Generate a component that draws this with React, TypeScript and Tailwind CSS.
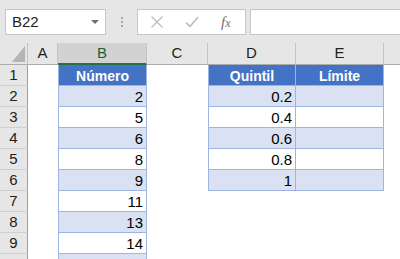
import React from "react";

type Row = { n: number; b?: string; d?: string; e?: string };

const rows: Row[] = [
  { n: 1, b: "Número", d: "Quintil", e: "Límite" },
  { n: 2, b: "2", d: "0.2", e: "" },
  { n: 3, b: "5", d: "0.4", e: "" },
  { n: 4, b: "6", d: "0.6", e: "" },
  { n: 5, b: "8", d: "0.8", e: "" },
  { n: 6, b: "9", d: "1", e: "" },
  { n: 7, b: "11" },
  { n: 8, b: "13" },
  { n: 9, b: "14" },
  { n: 10, b: "" },
];

const ColHead = ({ label, w, active = false }: { label: string; w: string; active?: boolean }) => (
  <div
    className={`${w} h-full shrink-0 box-border flex items-center justify-center text-[15px] border-r border-r-[#c4c4c4] ${
      active
        ? "bg-[#d2d2d2] border-b-2 border-b-[#217346] text-[#1d5e3a]"
        : "bg-[#e6e6e6] border-b border-b-[#ababab] text-[#222]"
    }`}
  >
    {label}
  </div>
);

const TableCell = ({
  text,
  n,
  w,
  left = false,
}: {
  text: string;
  n: number;
  w: string;
  left?: boolean;
}) => {
  const head = n === 1;
  const band = n % 2 === 0;
  return (
    <div
      className={`${w} h-full shrink-0 box-border border-r border-b border-[#9db5e0] ${left ? "border-l" : ""} ${
        head
          ? "bg-[#4472c4] text-white font-bold text-[14px] text-center"
          : band
          ? "bg-[#d9e1f2] text-black text-[15px] text-right pr-[3px]"
          : "bg-white text-black text-[15px] text-right pr-[3px]"
      } leading-[20px] pt-[1px]`}
    >
      {text}
    </div>
  );
};

export default function App() {
  return (
    <div className="w-[400px] h-[259px] overflow-hidden bg-white font-['Liberation_Sans',Arial,sans-serif]">
      {/* formula bar */}
      <div className="h-[43px] bg-[#e6e6e6] flex items-start pt-[9px] pl-[5px]">
        <div className="w-[101px] h-[26px] box-border bg-white border border-[#c6c6c6] flex items-center justify-between pl-[6px] pr-[6px] text-[15px] text-[#222]">
          <span>B22</span>
          <svg width="8" height="4" viewBox="0 0 8 4">
            <path d="M0 0 L8 0 L4 4 Z" fill="#6f6f6f" />
          </svg>
        </div>
        <div className="w-[31px] h-[26px] flex flex-col items-center justify-center gap-[2px]">
          <span className="w-[2px] h-[2px] bg-[#a6a6a6]" />
          <span className="w-[2px] h-[2px] bg-[#a6a6a6]" />
          <span className="w-[2px] h-[2px] bg-[#a6a6a6]" />
        </div>
        <div className="w-[109px] h-[26px] box-border bg-white border border-[#c6c6c6] flex items-center">
          <svg width="14" height="14" viewBox="0 0 14 14" className="ml-[12px]">
            <path d="M1.5 1.5 L12.5 12.5 M12.5 1.5 L1.5 12.5" stroke="#bcbcbc" strokeWidth="1.3" />
          </svg>
          <svg width="14" height="12" viewBox="0 0 14 12" className="ml-[21px]">
            <path d="M1 6.5 L5 10.5 L13 1" stroke="#bcbcbc" strokeWidth="1.6" fill="none" />
          </svg>
          <span className="ml-[22px] text-[15px] italic text-[#6f6f6f] font-['Liberation_Serif',serif] leading-none">
            f<span className="text-[12px]">x</span>
          </span>
        </div>
        <div className="flex-1 ml-[4px] -mr-[4px] h-[26px] box-border bg-white border border-[#c6c6c6]" />
      </div>

      {/* column headers */}
      <div className="h-[22px] flex">
        <div className="w-[28px] h-full shrink-0 box-border bg-[#e6e6e6] border-r border-r-[#c4c4c4] border-b border-b-[#ababab] flex items-end justify-end pr-[2px] pb-[2px]">
          <svg width="13" height="16" viewBox="0 0 13 16">
            <path d="M13 0 L13 16 L0 16 Z" fill="#b4b4b4" />
          </svg>
        </div>
        <ColHead label="A" w="w-[30px]" />
        <ColHead label="B" w="w-[89px]" active />
        <ColHead label="C" w="w-[61px]" />
        <ColHead label="D" w="w-[88px]" />
        <ColHead label="E" w="w-[88px]" />
        <div className="flex-1 h-full bg-[#e6e6e6] border-b border-b-[#ababab]" />
      </div>

      {/* rows */}
      {rows.map((r) => (
        <div key={r.n} className="h-[21px] flex">
          <div className="w-[28px] h-full shrink-0 box-border bg-[#e6e6e6] border-r border-r-[#9f9f9f] border-b border-b-[#d0d0d0] flex items-center justify-center text-[15px] text-[#222]">
            {r.n < 10 ? r.n : null}
          </div>
          <div className="w-[30px] shrink-0" />
          {r.b !== undefined ? <TableCell text={r.b} n={r.n} w="w-[89px]" left /> : <div className="w-[89px] shrink-0" />}
          <div className="w-[61px] shrink-0" />
          {r.d !== undefined ? (
            <>
              <TableCell text={r.d} n={r.n} w="w-[88px]" left />
              <TableCell text={r.e ?? ""} n={r.n} w="w-[88px]" />
            </>
          ) : null}
        </div>
      ))}
    </div>
  );
}
